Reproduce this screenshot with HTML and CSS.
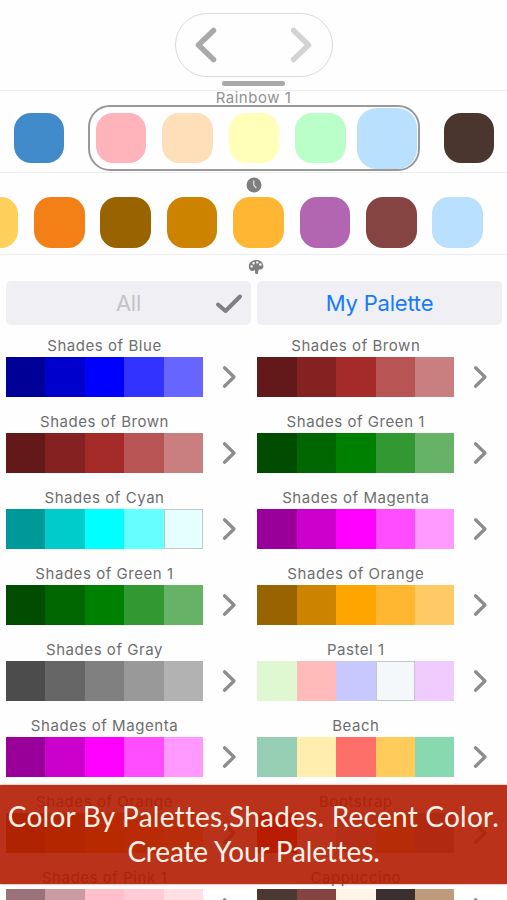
FILE: index.html
```html
<!DOCTYPE html>
<html lang="en">
<head>
<meta charset="utf-8">
<title>Color Palettes</title>
<link rel="stylesheet" href="styles.css">
</head>
<body>
<svg width="0" height="0" class="defs"><symbol id="next" viewBox="0 0 16 24"><path d="M3.500 2.800 13 12 3.500 21.200"/></symbol></svg>
<main class="screen">
  <header class="top">
    <nav class="pager">
      <svg class="arrow back" viewBox="0 0 22 36"><path d="M18.500 3.500 3.500 18 18.500 32.500"/></svg>
      <svg class="arrow forward" viewBox="0 0 22 36"><path d="M2.500 3.500 17.500 18 2.500 32.500"/></svg>
    </nav>
    <div class="handle"></div>
  </header>
  <section class="current">
    <h1>Rainbow 1</h1>
    <div class="carousel">
      <i class="swatch" style="background:#428bca"></i>
      <div class="group">
        <i class="swatch" style="background:#ffb3ba"></i>
        <i class="swatch" style="background:#ffdfba"></i>
        <i class="swatch" style="background:#ffffba"></i>
        <i class="swatch" style="background:#baffc9"></i>
        <i class="swatch active" style="background:#b9e0ff"></i>
      </div>
      <i class="swatch" style="background:#4a362f"></i>
    </div>
  </section>
  <section class="recent">
    <svg class="clock" viewBox="0 0 16 16"><circle cx="8" cy="8" r="7.5"/><path d="M7.7 3.5V8l2.7 3.2"/></svg>
    <div class="history">
      <i class="swatch" style="background:#ffcf5c"></i>
      <i class="swatch" style="background:#f28016"></i>
      <i class="swatch" style="background:#996300"></i>
      <i class="swatch" style="background:#cc8400"></i>
      <i class="swatch" style="background:#ffb733"></i>
      <i class="swatch" style="background:#b266b2"></i>
      <i class="swatch" style="background:#854442"></i>
      <i class="swatch" style="background:#b9e0ff"></i>
    </div>
  </section>
  <section class="library">
    <svg class="paint" viewBox="0 0 16 16"><path fill-rule="evenodd" d="M8.500 1C4 1 .8 3.700.8 7.300c0 3 1.600 4.700 3.400 4.700.9 0 1.500-.8 2.300-.8.8 0 .5.800.5 1.800 0 1.400.5 2.200 1.600 2.200 1.300 0 1.600-1.200 1.600-2.500 0-1.700.7-2.200 2.200-2.200 1.900 0 3-1.200 3-3.200C15.400 3.500 12.500 1 8.500 1ZM3.600 6.200a1.200 1.200 0 1 1 0 2.400 1.200 1.200 0 0 1 0-2.400ZM5.600 3a1.200 1.200 0 1 1 0 2.400 1.200 1.200 0 0 1 0-2.400ZM9.300 2.200a1.200 1.200 0 1 1 0 2.400 1.200 1.200 0 0 1 0-2.400ZM12.400 4.200a1.300 1.300 0 1 1 0 2.600 1.300 1.300 0 0 1 0-2.600Z"/></svg>
    <div class="tabs">
      <button class="tab selected">All<svg class="check" viewBox="0 0 28 22"><path d="M3 11.500 10.500 18 25 3.500"/></svg></button>
      <button class="tab">My Palette</button>
    </div>
    <div class="grid" id="grid"></div>
  </section>
  <aside class="banner"><p class="lead">Color By Palettes,Shades. Recent Color.</p><p class="follow">Create Your Palettes.</p></aside>
</main>
<script src="palettes.js"></script>
</body>
</html>
```
FILE: styles.css
```css
* { box-sizing: border-box; }
body { margin: 0; background: #fff; font-family: Inter, "Liberation Sans", sans-serif; }
.defs { position: absolute; }
.screen { position: relative; width: 507px; height: 900px; overflow: hidden; background: #fefefe; }
.top { height: 91px; padding-top: 13px; border-bottom: 1px solid #ededef; }
.pager { width: 158px; height: 64px; margin: 0 0 0 175px; border: 1px solid #dadada; border-radius: 32px; display: flex; justify-content: space-between; align-items: center; padding: 0 19px; }
.arrow { width: 22px; height: 36px; fill: none; stroke-width: 5.500; stroke-linecap: round; stroke-linejoin: round; }
.back { stroke: #a9a9a9; }
.forward { stroke: #d3d3d3; }
.handle { width: 63px; height: 5px; margin: 4px auto 0; border-radius: 3px; background: #a9a9a9; }
.current { height: 82px; border-bottom: 1px solid #ededef; }
h1 { margin: 0; height: 14px; line-height: 14px; text-align: center; font-size: 15px; font-weight: 400; letter-spacing: 0.5px; color: #929292; }
.carousel { display: flex; align-items: center; width: 507px; padding-left: 13.500px; gap: 24.200px; height: 66px; }
.swatch { display: block; flex: none; width: 50.500px; height: 50.500px; border-radius: 17px; }
.group { flex: none; display: flex; align-items: center; width: 331.500px; height: 66px; border: 2px solid #999; border-radius: 22px; padding-left: 5.700px; gap: 15.900px; }
.active { width: 60.500px; height: 61px; border-radius: 20px; margin-left: -4.500px; }
.recent { height: 82px; border-bottom: 1px solid #ededef; }
.clock { display: block; width: 16px; height: 16px; margin: 0 auto; position: relative; top: 3.500px; fill: #7f7f7f; }
.clock path { fill: none; stroke: #e4e4e4; stroke-width: 1.2; }
.history { display: flex; gap: 15.900px; margin: 8px 0 0 -32.300px; }
.library { padding: 4px 5px 0 6px; }
.paint { display: block; width: 16px; height: 16px; margin: 0 0 0 241.500px; fill: #7f7f7f; }
.tabs { display: flex; gap: 6px; margin-top: 6px; }
.tab { position: relative; width: 245px; height: 44px; border: 0; border-radius: 5px; padding: 0; background: #efeff4; color: #187cf8; font: 400 22px Inter, sans-serif; letter-spacing: -0.2px; }
.selected { color: #c4c4c6; }
.check { position: absolute; right: 8px; top: 12px; width: 28px; height: 22px; fill: none; stroke: #808083; stroke-width: 4; stroke-linecap: round; stroke-linejoin: round; }
.grid { display: grid; grid-template-columns: 251.300px 245px; grid-auto-rows: 76px; padding-top: 12px; }
.name { width: 197px; height: 20px; line-height: 18px; text-align: center; font-size: 15px; letter-spacing: 0.55px; color: #6e6e6e; white-space: nowrap; }
.line { display: flex; align-items: center; gap: 18px; }
.strip { display: flex; width: 197px; height: 39.500px; }
.strip i { flex: 1; }
.strip .outlined { box-shadow: inset 0 0 0 1px #c3c9ca; }
.go { width: 16px; height: 24px; fill: none; stroke: #8d8d8d; stroke-width: 3.300; stroke-linecap: round; stroke-linejoin: round; }
.banner { position: absolute; left: 0; top: 785px; width: 507px; height: 99px; padding-top: 14px; background: rgba(177, 28, 0, 0.9); color: #fff1ea; box-shadow: 0 0 2px rgba(100, 40, 30, 0.6); text-align: center; font-family: Lato, sans-serif; font-size: 28px; line-height: 35px; white-space: nowrap; }
.banner p { margin: 0; }
.lead { letter-spacing: 0.23px; }
.follow { letter-spacing: -0.15px; }
```
FILE: palettes.js
```js
const palettes = [
  ["Shades of Blue", "#000099 #0000cc #0000ff #3333ff #6666ff"],
  ["Shades of Brown", "#631919 #842121 #a52a2a #b75555 #c97f7f"],
  ["Shades of Brown", "#631919 #842121 #a52a2a #b75555 #c97f7f"],
  ["Shades of Green 1", "#004c00 #006600 #008000 #329932 #66b266"],
  ["Shades of Cyan", "#009999 #00cccc #00ffff #66ffff #e5ffff", 4],
  ["Shades of Magenta", "#990099 #cc00cc #ff00ff #ff4cff #ff99ff"],
  ["Shades of Green 1", "#004c00 #006600 #008000 #329932 #66b266"],
  ["Shades of Orange", "#996300 #cc8400 #ffa500 #ffb732 #ffc966"],
  ["Shades of Gray", "#4c4c4c #666666 #808080 #999999 #b2b2b2"],
  ["Pastel 1", "#e0f8d2 #ffbaba #c8c8ff #f5f8fa #f0cbfe", 3],
  ["Shades of Magenta", "#990099 #cc00cc #ff00ff #ff4cff #ff99ff"],
  ["Beach", "#96ceb4 #ffeead #ff6f69 #ffcc5c #88d8b0"],
  ["Shades of Orange", "#996300 #cc8400 #ffa500 #ffb732 #ffc966"],
  ["Bootstrap", "#ff2a10 #f9f9f9 #d0d0d0 #d8c040 #a0a0a0"],
  ["Shades of Pink 1", "#997379 #cc9aa1 #ffc0cb #ffccd5 #ffdfe3"],
  ["Cappuccino", "#4b3832 #854442 #fff4e6 #3c2f2f #be9b7b"]
];
document.getElementById("grid").innerHTML = palettes.map(([name, colors, outlined]) =>
  `<div class="palette"><div class="name">${name}</div><div class="line"><div class="strip">${
    colors.split(" ").map((c, i) => `<i${i === outlined ? ' class="outlined"' : ""} style="background:${c}"></i>`).join("")
  }</div><svg class="go"><use href="#next"/></svg></div></div>`).join("");
```
